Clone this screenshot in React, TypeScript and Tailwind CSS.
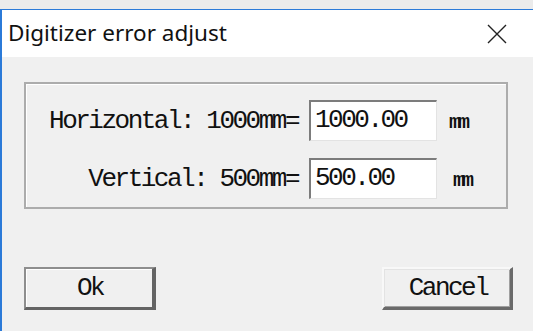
export default function App() {
    const mono = { fontFamily: '"Liberation Mono", "DejaVu Sans Mono", monospace' }

    const renderField = (label: string, value: string, unitMargin: string) => {
        return (
            <div className="flex flex-row items-center">
                <p className="w-[272px] text-right text-[26px] leading-none tracking-[-2.5px] text-[#111]" style={mono}>
                    {label}
                </p>
                <div className="ml-[11px] w-[128px] h-[41px] bg-white border-t-2 border-l-2 border-b border-r border-t-[#7c7c7c] border-l-[#7c7c7c] border-b-[#e3e3e3] border-r-[#e3e3e3] flex items-center pl-[4px] pb-[3px]">
                    <span className="text-[26px] leading-none tracking-[-2.5px] text-[#111]" style={mono}>{value}</span>
                </div>
                <p className={"text-[20px] leading-none tracking-[-3px] font-bold text-[#111] pt-[4px] " + unitMargin} style={mono}>
                    mm
                </p>
            </div>
        )
    }

    return (
        <div className="w-[533px] h-[331px] overflow-hidden flex flex-col bg-[#ebebeb]">
            <div className="h-[9px] bg-[#ebebeb]" />
            <div className="flex-1 flex flex-col border-t border-l-2 border-[#2b7ad8]">
                {/* title bar */}
                <div className="h-[47px] bg-white flex flex-row items-center pl-[6px] pr-[26px]">
                    <p className="text-[22.5px] text-[#111] pb-[1px]" style={{ fontFamily: '"Noto Sans", "Open Sans", sans-serif' }}>
                        Digitizer error adjust
                    </p>
                    <svg className="ml-auto" width="20" height="20" viewBox="0 0 20 20">
                        <path d="M1 1 L19 19 M19 1 L1 19" stroke="#222" strokeWidth="1.4" fill="none" />
                    </svg>
                </div>

                {/* body */}
                <div className="flex-1 bg-[#f0f0f0] pt-[25px] pl-[22px]">
                    <div className="w-[484px] h-[127px] border-2 border-[#acacac] shadow-[inset_1px_1px_0_#ffffff] flex flex-col pt-[16px] gap-[17px]">
                        {renderField("Horizontal: 1000mm=", "1000.00", "ml-[12px]")}
                        {renderField("Vertical: 500mm=", "500.00", "ml-[16px]")}
                    </div>

                    <div className="flex flex-row mt-[58px] w-[489px] justify-between">
                        <button className="w-[132px] h-[43px] bg-[#f0f0f0] border-t-2 border-l-2 border-r-[4px] border-b-[3px] border-t-[#8e8e8e] border-l-[#8e8e8e] border-r-[#646464] border-b-[#646464] shadow-[inset_1px_1px_0_#ffffff] flex items-center justify-center">
                            <span className="text-[26px] leading-none tracking-[-2.5px] text-[#111] pl-[2px]" style={mono}>Ok</span>
                        </button>
                        <button className="w-[131px] h-[43px] bg-[#f0f0f0] border-t-2 border-l-2 border-r-[3px] border-b-[3px] border-t-[#f8f8f8] border-l-[#f8f8f8] border-r-[#6a6a6a] border-b-[#6a6a6a] shadow-[inset_1px_1px_0_#e3e3e3,inset_-1px_-1px_0_#a0a0a0] flex items-center justify-center">
                            <span className="text-[26px] leading-none tracking-[-2.5px] text-[#111] pl-[2px]" style={mono}>Cancel</span>
                        </button>
                    </div>
                </div>
            </div>
        </div>
    )
}
